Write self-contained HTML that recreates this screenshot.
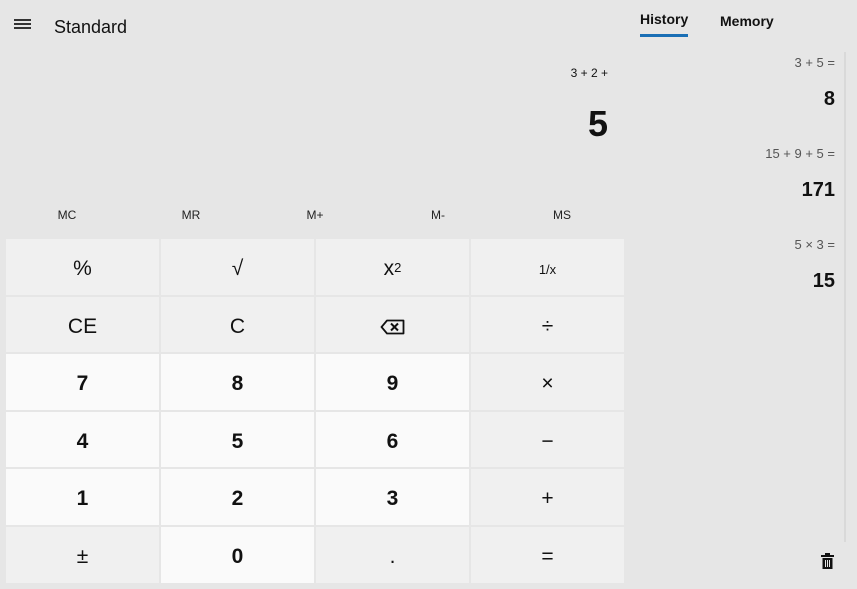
<!DOCTYPE html>
<html><head><meta charset="utf-8"><style>
*{margin:0;padding:0;box-sizing:border-box}
body{width:857px;height:589px;background:#e6e6e6;font-family:"Liberation Sans","DejaVu Sans",sans-serif;color:#111;position:relative;overflow:hidden}
.a{position:absolute}
.b{position:absolute;display:flex;align-items:center;justify-content:center;width:153px;background:#f0f0f0;font-size:21px;padding-top:4px}
.n{background:#fafafa;font-weight:bold}
.m{position:absolute;top:208px;font-size:12px;color:#222;transform:translateX(-50%)}
.h{position:absolute;right:22px;text-align:right}
.he{font-size:13px;color:#555}
.hr{font-size:20px;font-weight:bold;color:#111}
</style></head><body>
<div class="a" style="left:14px;top:19px;width:17px;height:1.5px;background:#333;box-shadow:0 4px 0 #333,0 8px 0 #333"></div>
<div class="a" style="left:54px;top:17px;font-size:18px;color:#111">Standard</div>
<div class="a" style="left:640px;top:11px;font-size:14px;font-weight:bold">History</div>
<div class="a" style="left:640px;top:34px;width:48px;height:3px;background:#1a6fb5"></div>
<div class="a" style="left:720px;top:13px;font-size:14px;font-weight:bold">Memory</div>
<div class="a" style="left:844px;top:52px;width:2px;height:490px;background:#d9d9d9"></div>
<div class="a" style="right:249px;top:66px;font-size:12px">3 + 2 +</div>
<div class="a" style="right:249px;top:103px;font-size:36px;font-weight:bold">5</div>
<div class="m" style="left:67px">MC</div>
<div class="m" style="left:191px">MR</div>
<div class="m" style="left:315px">M+</div>
<div class="m" style="left:438px">M-</div>
<div class="m" style="left:562px">MS</div>

<div class="h he" style="top:55px">3 + 5 =</div>
<div class="h hr" style="top:88px">8</div>
<div class="h he" style="top:146px">15 + 9 + 5 =</div>
<div class="h hr" style="top:179px">171</div>
<div class="h he" style="top:237px">5 × 3 =</div>
<div class="h hr" style="top:270px">15</div>
<svg class="a" style="left:820px;top:553px" width="15" height="17" viewBox="0 0 15 17"><rect x="1" y="2" width="13" height="2" fill="#111"/><rect x="5" y="0" width="5" height="2" fill="#111"/><rect x="2.5" y="5" width="10" height="11" fill="#111"/><rect x="5" y="7" width="1" height="7" fill="#e6e6e6"/><rect x="7" y="7" width="1" height="7" fill="#e6e6e6"/><rect x="9" y="7" width="1" height="7" fill="#e6e6e6"/></svg>

<div class="b" style="left:6px;top:239px;height:56px">%</div>
<div class="b" style="left:161px;top:239px;height:56px">√</div>
<div class="b" style="left:316px;top:239px;height:56px">x<sup style="font-size:13px;position:relative;top:-2px">2</sup></div>
<div class="b" style="left:471px;top:239px;height:56px;font-size:13px">1/x</div>

<div class="b" style="left:6px;top:297px;height:55px">CE</div>
<div class="b" style="left:161px;top:297px;height:55px">C</div>
<div class="b" style="left:316px;top:297px;height:55px"><svg width="25" height="16" viewBox="0 0 25 16"><path d="M7 1.5H23.5V14.5H7L1.5 8Z" fill="none" stroke="#111" stroke-width="1.8" stroke-linejoin="round"/><path d="M11 4.5L18 11.5M18 4.5L11 11.5" stroke="#111" stroke-width="2"/></svg></div>
<div class="b" style="left:471px;top:297px;height:55px">÷</div>

<div class="b n" style="left:6px;top:354px;height:56px">7</div>
<div class="b n" style="left:161px;top:354px;height:56px">8</div>
<div class="b n" style="left:316px;top:354px;height:56px">9</div>
<div class="b" style="left:471px;top:354px;height:56px">×</div>

<div class="b n" style="left:6px;top:412px;height:55px">4</div>
<div class="b n" style="left:161px;top:412px;height:55px">5</div>
<div class="b n" style="left:316px;top:412px;height:55px">6</div>
<div class="b" style="left:471px;top:412px;height:55px">−</div>

<div class="b n" style="left:6px;top:469px;height:56px">1</div>
<div class="b n" style="left:161px;top:469px;height:56px">2</div>
<div class="b n" style="left:316px;top:469px;height:56px">3</div>
<div class="b" style="left:471px;top:469px;height:56px">+</div>

<div class="b" style="left:6px;top:527px;height:56px">±</div>
<div class="b n" style="left:161px;top:527px;height:56px">0</div>
<div class="b" style="left:316px;top:527px;height:56px">.</div>
<div class="b" style="left:471px;top:527px;height:56px">=</div>
</body></html>
